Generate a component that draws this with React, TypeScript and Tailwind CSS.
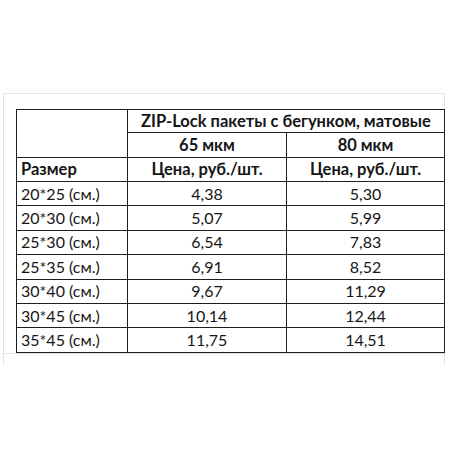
import React from "react";

const rows: [string, string, string][] = [
  ["20*25 (см.)", "4,38", "5,30"],
  ["20*30 (см.)", "5,07", "5,99"],
  ["25*30 (см.)", "6,54", "7,83"],
  ["25*35 (см.)", "6,91", "8,52"],
  ["30*40 (см.)", "9,67", "11,29"],
  ["30*45 (см.)", "10,14", "12,44"],
  ["35*45 (см.)", "11,75", "14,51"],
];

export default function App() {
  const cell = "border border-[#1e1e1e] p-0 leading-none";
  const bold = "font-bold text-[16.5px]";
  return (
    <div
      className="w-[460px] h-[460px] bg-white text-[#161616] text-[16px]"
      style={{ fontFamily: "Lato, 'Noto Sans', sans-serif" }}
    >
      <div className="pt-[93px]">
        <div className="ml-[3px] w-[442px] border-t border-l border-r border-[#e4e4e4] pt-[15px] pl-[12px]">
          <table className="border-collapse table-fixed w-[428px]">
            <colgroup>
              <col className="w-[111px]" />
              <col className="w-[159px]" />
              <col className="w-[158px]" />
            </colgroup>
            <tbody>
              <tr className="h-[23px]">
                <td rowSpan={2} className={cell}></td>
                <td colSpan={2} className={`${cell} ${bold} text-center`}>
                  ZIP-Lock пакеты с бегунком, матовые
                </td>
              </tr>
              <tr className="h-[25px]">
                <td className={`${cell} ${bold} text-center`}>65 мкм</td>
                <td className={`${cell} ${bold} text-center`}>80 мкм</td>
              </tr>
              <tr className="h-[24px]">
                <td className={`${cell} ${bold} text-left pl-[4px]`}>Размер</td>
                <td className={`${cell} ${bold} text-center`}>Цена, руб./шт.</td>
                <td className={`${cell} ${bold} text-center`}>Цена, руб./шт.</td>
              </tr>
              {rows.map((r, i) => (
                <tr key={i} className="h-[24.4px]">
                  <td className={`${cell} text-left pl-[4px]`}>{r[0]}</td>
                  <td className={`${cell} text-center`}>{r[1]}</td>
                  <td className={`${cell} text-center`}>{r[2]}</td>
                </tr>
              ))}
            </tbody>
          </table>
          <div className="h-[13px] border-t border-[#e4e4e4] -ml-[12px]"></div>
        </div>
      </div>
    </div>
  );
}
